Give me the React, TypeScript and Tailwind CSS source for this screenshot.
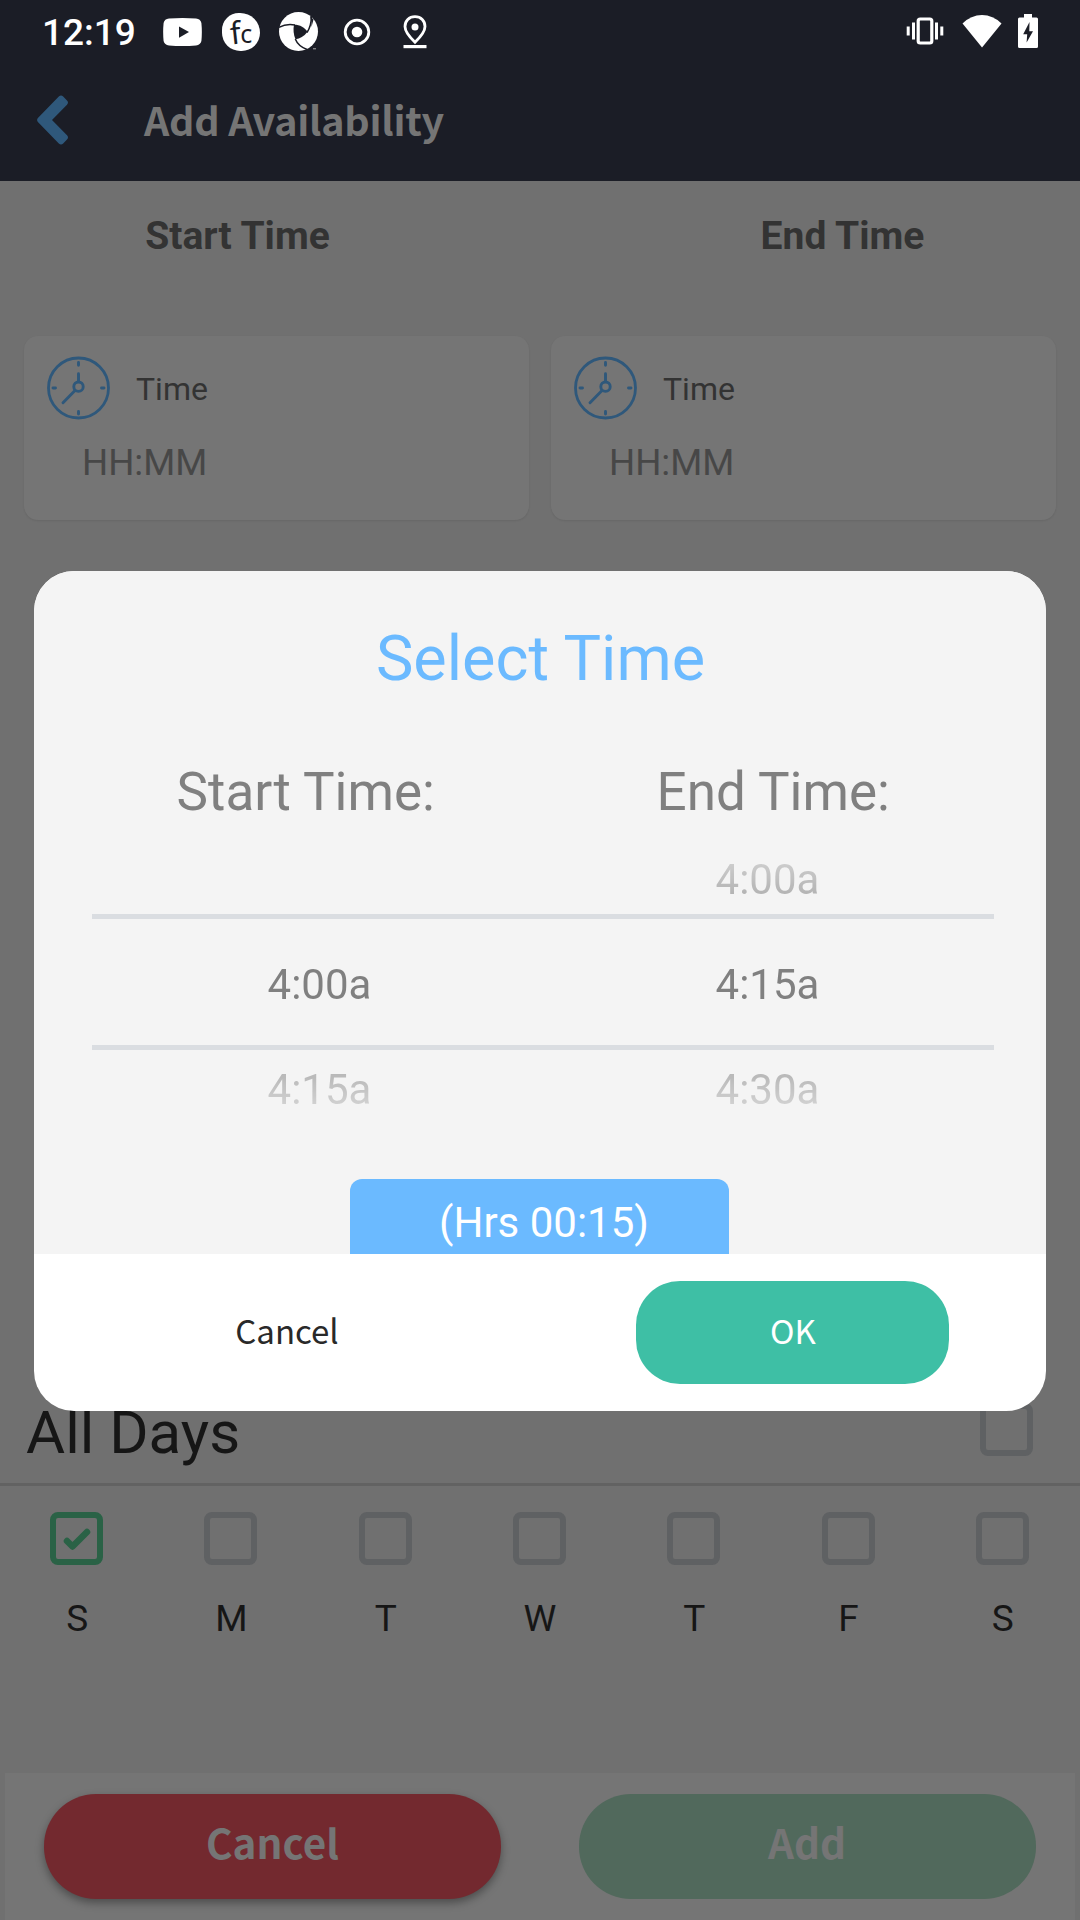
import React from "react";

const roboto = "font-['Roboto','Liberation_Sans',sans-serif]";
const source = "font-['Noto_Sans_CJK_SC','Noto_Sans',sans-serif]";

function StatusBar() {
  return (
    <div className="flex h-[60px] items-center pt-[5px] pl-[42px] pr-[42px] text-white">
      <span className={`${roboto} w-[121px] pt-px text-[37px] leading-[40px] font-medium`}>12:19</span>
      <svg className="mb-px h-[28px] w-[39px] shrink-0" viewBox="0 0 39 28">
        <path d="M6 .6Q19.500-.6 33 .6Q37.500 1 38.400 5Q39.300 14 38.400 23Q37.500 27 33 27.400Q19.500 28.600 6 27.400Q1.500 27 .6 23Q-.3 14 .6 5Q1.500 1 6 .6Z" fill="#fff" />
        <path d="M16 8.500L26 14L16 19.800Z" fill="#1b1d26" />
      </svg>
      <div className="mb-[2px] ml-[20px] flex h-[38px] w-[38px] shrink-0 items-center justify-center rounded-[46%_54%_50%_50%] bg-white font-['Noto_Sans',sans-serif] leading-[38px] text-[#1b1d26]">
        <span className="-rotate-6 text-[31px]">f</span>
        <span className="pt-[2px] text-[25px]">c</span>
      </div>
      <svg className="mb-px ml-[19px] h-[40px] w-[40px] shrink-0" viewBox="0 0 40 40">
        <circle cx="19.500" cy="19.500" r="19.500" fill="#fff" />
        <path d="M15 12.800C21 12.800 26 15.500 28.300 20C25 24.500 21 26.500 16.500 27.200C14.500 23 14 17 15 12.800Z" fill="#1b1d26" />
        <path d="M0 15.300Q7 11.500 16 13M32.300 4Q32.500 14 28 20.500M16.300 27Q19 34 28 37.500" fill="none" stroke="#1b1d26" strokeWidth="1.500" />
        <path d="M31 4L34.500 7.500L32.500 15Q33 9 31 4Z" fill="#1b1d26" />
        <path d="M33 36.500L39 29V40H33Z" fill="#1b1d26" />
        <path d="M34 36.800H37" stroke="#aaa" strokeWidth="1" />
      </svg>
      <svg className="mb-[2px] ml-[24px] h-[28px] w-[28px] shrink-0" viewBox="0 0 28 28">
        <circle cx="14" cy="14" r="11.800" fill="none" stroke="#fff" strokeWidth="2.800" />
        <circle cx="14" cy="14" r="5.300" fill="#fff" />
      </svg>
      <svg className="mb-[2px] ml-[31px] h-[34px] w-[26px] shrink-0" viewBox="0 0 26 34">
        <path d="M13 1.600C19 1.600 23 6 23 11.500C23 17 18.500 22 13 27.200C7.500 22 3 17 3 11.500C3 6 7 1.600 13 1.600Z" fill="none" stroke="#fff" strokeWidth="2.800" />
        <circle cx="13" cy="12" r="3.500" fill="#fff" />
        <rect x="1.500" y="30" width="23" height="3.200" fill="#fff" />
      </svg>
      <div className="ml-auto flex items-center">
        <svg className="mb-[3px] h-[28px] w-[38px]" viewBox="0 0 38 28" fill="none" stroke="#fff">
          <rect x="12.200" y="2" width="13.600" height="24" rx="2" strokeWidth="3.200" />
          <path d="M7.500 5.500V22.500M30.500 5.500V22.500M2.200 9.500V18.500M35.800 9.500V18.500" strokeWidth="3" />
        </svg>
        <svg className="mb-[4px] ml-[18px] h-[34px] w-[40px]" viewBox="0 0 40 34">
          <path d="M20 33.500L.5 9.500Q9 1 20 1T39.500 9.500Z" fill="#fff" />
        </svg>
        <svg className="mb-[3px] ml-[16px] h-[34px] w-[20px]" viewBox="0 0 20 34">
          <path d="M6 0H14V3.500H18.500Q20 3.500 20 5V32.500Q20 34 18.500 34H1.500Q0 34 0 32.500V5Q0 3.500 1.500 3.500H6Z" fill="#fff" />
          <path d="M11.500 8L5.200 20.300H9.200L8.600 28.500L15 17.200H11.300Z" fill="#1b1d26" />
        </svg>
      </div>
    </div>
  );
}

function ClockIcon() {
  return (
    <svg className="h-[64px] w-[63px] shrink-0" viewBox="0 0 63 64" fill="none" stroke="#2f587b" strokeWidth="2.900" strokeLinecap="round">
      <circle cx="31.500" cy="32" r="30" strokeWidth="2.800" />
      <circle cx="31.500" cy="30.700" r="4.700" />
      <path d="M31.500 25.500V17.700M28 34.500L16 46.700" />
      <path d="M31.500 6.500V9.200M31.500 55.500V58M6 32H8.500M54.500 32H57" />
    </svg>
  );
}

function TimeCard() {
  return (
    <div className="h-[184px] w-[505px] rounded-[14px] bg-[#757575] pt-[20px] pl-[23px] shadow-[0_1px_2px_rgba(0,0,0,0.08)]">
      <div className="flex h-[63px] items-center">
        <ClockIcon />
        <span className="ml-[26px] pt-[3px] text-[32px] leading-[36px] text-[#333]">Time</span>
      </div>
      <div className="h-[86px] pt-px pl-[35px] text-[36.7px] leading-[86px] text-[#474747]">HH:MM</div>
    </div>
  );
}

function Checkbox({ checked = false }: { checked?: boolean }) {
  return (
    <div className={`flex h-[53px] w-[53px] items-center justify-center rounded-[8px] border-[6px] ${checked ? "border-[#2a6246]" : "border-[#5f6163]"}`}>
      {checked && (
        <svg className="h-[24px] w-[28px]" viewBox="0 0 28 24" fill="none" stroke="#2a6246" strokeWidth="6.500" strokeLinecap="round" strokeLinejoin="round">
          <path d="M4 14L9.500 19.500L24 5" />
        </svg>
      )}
    </div>
  );
}

function PickerColumn({ items }: { items: string[] }) {
  return (
    <div className="w-[448px] text-center text-[42px] leading-[105px] text-[#808080]">
      {items.map((t, i) => (
        <div key={i} className="h-[105px]">{t}</div>
      ))}
    </div>
  );
}

function TimeDialog() {
  return (
    <div className="absolute top-[571px] left-[34px] flex h-[840px] w-[1012px] flex-col overflow-hidden rounded-[40px] bg-white">
      <div className="h-[683px] overflow-hidden bg-[#f4f4f4]">
        <h2 className="mt-[48px] pl-px text-center text-[63px] leading-[80px] text-[#6bbaff]">Select Time</h2>
        <div className="mt-[63px] ml-[38px] flex w-[935px] text-[53px] leading-[60px] text-[#808080]">
          <span className="flex-1 text-center">Start Time:</span>
          <span className="flex-1 text-center">End Time:</span>
        </div>
        <div className="relative mt-[5px] ml-[58px] h-[315px] w-[902px]">
          <div className="flex pl-[3.5px] [mask-image:linear-gradient(to_bottom,transparent_-12px,black_131px,black_178px,transparent_321px)]">
            <PickerColumn items={["", "4:00a", "4:15a"]} />
            <PickerColumn items={["4:00a", "4:15a", "4:30a"]} />
          </div>
          <div className="absolute top-[87px] left-0 h-[5px] w-full bg-[#dadde1]" />
          <div className="absolute top-[218px] left-0 h-[5px] w-full bg-[#dadde1]" />
        </div>
        <div className="mt-[37px] ml-[316px] h-[100px] w-[379px] rounded-[12px] bg-[#6bbaff] pl-[9px] text-center text-[42px] leading-[88px] text-white">(Hrs 00:15)</div>
      </div>
      <div className={`${source} grid h-[157px] grid-cols-2 items-center justify-items-center text-[33px] leading-[40px]`}>
        <button className="pb-[6px] text-[#292929]">Cancel</button>
        <button className="mr-px flex h-[103px] w-[313px] items-center justify-center rounded-[44px] bg-[#3ebfa5] pb-[6px] pl-px text-white">OK</button>
      </div>
    </div>
  );
}

const days = ["S", "M", "T", "W", "T", "F", "S"];

export default function App() {
  return (
    <div className={`${roboto} relative flex h-[1920px] w-[1080px] flex-col overflow-hidden bg-[#707070]`}>
      <header className="h-[181px] shrink-0 bg-[#1b1d26]">
        <StatusBar />
        <div className="flex h-[121px] items-center pb-px pl-[37px]">
          <svg className="h-[50px] w-[32px]" viewBox="0 0 32 50">
            <path d="M21.800 1.600Q24 -.4 26.200 1.600L30 5.400Q32 7.600 30 9.800L15 25L30 40.200Q32 42.400 30 44.600L26.200 48.400Q24 50.400 21.800 48.400L.9 27Q-.7 25 .9 23Z" fill="#2f587b" />
          </svg>
          <h1 className={`${source} mb-[2px] ml-[75px] text-[39.500px] leading-[48px] font-bold tracking-[-0.25px] text-[#757575]`}>Add Availability</h1>
        </div>
      </header>
      <div className="flex h-[109px] shrink-0 justify-between pt-px text-center text-[39px] leading-[109px] font-bold text-[#333]">
        <span className="w-[475px]">Start Time</span>
        <span className="w-[475px]">End Time</span>
      </div>
      <div className="mt-[46px] flex shrink-0 justify-between px-[24px]">
        <TimeCard />
        <TimeCard />
      </div>
      <div className="mt-[856px] flex h-[110px] shrink-0 items-center justify-between border-b-[3px] border-[#626262] pr-[47px] pl-[26px]">
        <span className="pt-[7px] text-[60px] leading-[70px] text-[#161616]">All Days</span>
        <Checkbox />
      </div>
      <div className="grid shrink-0 grid-cols-7 justify-items-center pt-[26px]">
        {days.map((d, i) => (
          <div key={i} className="-ml-px flex flex-col items-center">
            <Checkbox checked={i === 0} />
            <span className="mt-[32px] pl-px text-[37px] leading-[44px] text-[#161616]">{d}</span>
          </div>
        ))}
      </div>
      <footer className={`${source} mx-[5px] mt-auto flex h-[147px] shrink-0 gap-[78px] bg-[#757575] pt-[21px] pl-[39px] text-[40.500px] font-bold text-[#757575]`}>
        <button className="flex h-[105px] w-[457px] items-center justify-center rounded-[52px] bg-[#73292f] pb-[8px] shadow-[0_4px_8px_rgba(0,0,0,0.35)]">Cancel</button>
        <button className="flex h-[105px] w-[457px] items-center justify-center rounded-[52px] bg-[#51695c] pr-px pb-[8px]">Add</button>
      </footer>
      <TimeDialog />
    </div>
  );
}
